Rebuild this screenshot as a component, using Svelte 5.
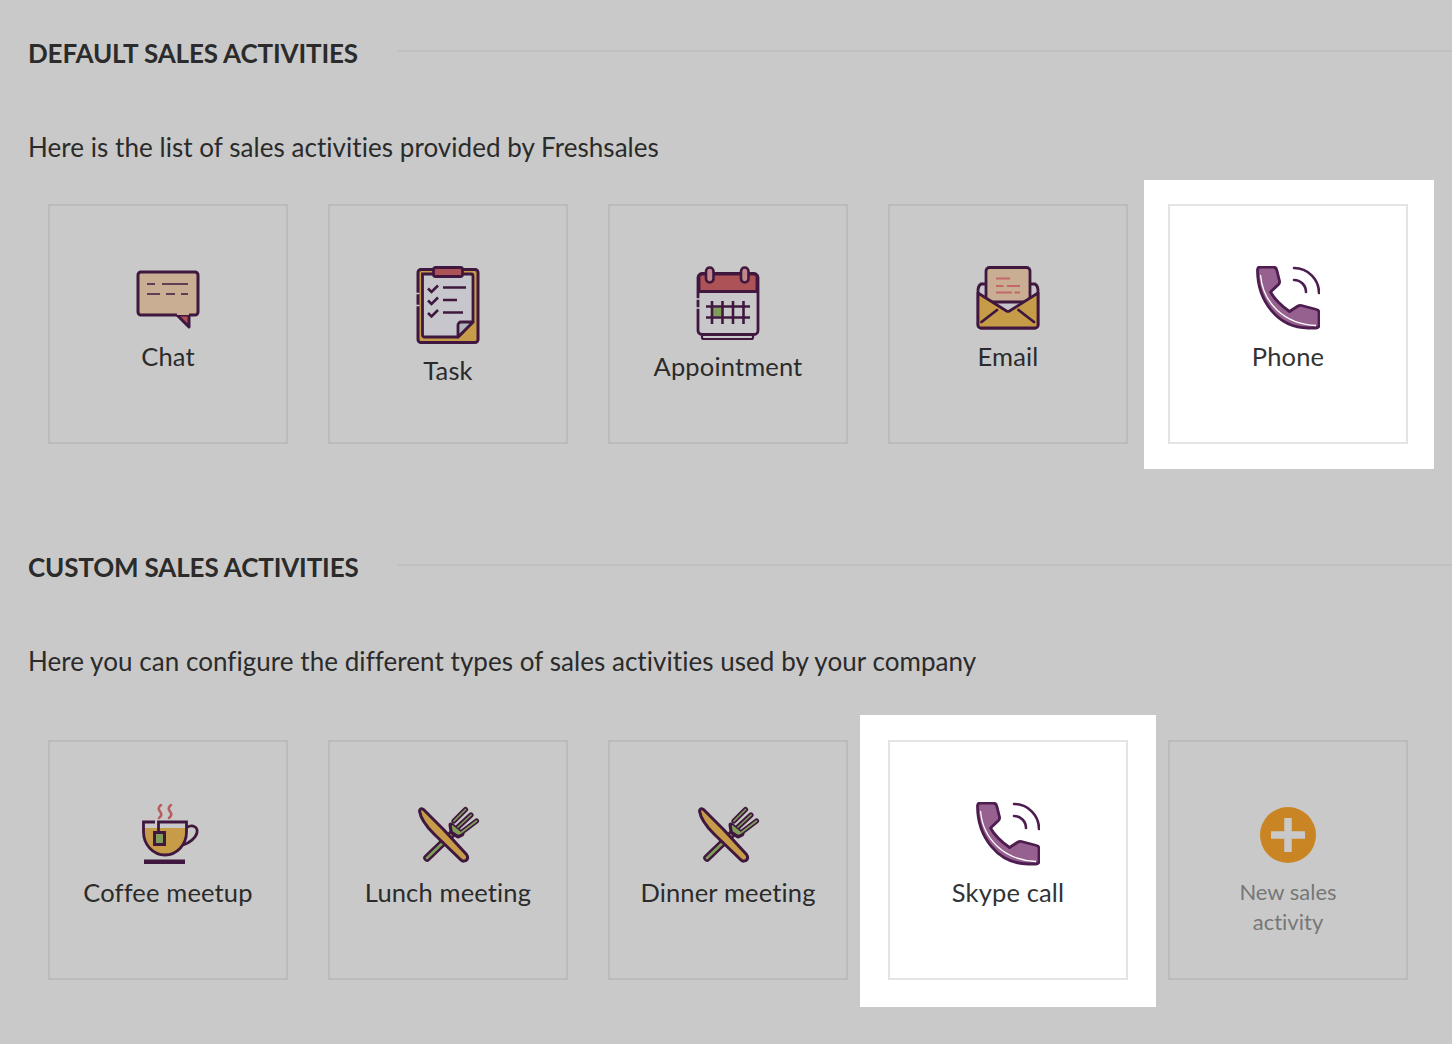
<script>
  const defaults = [
    { label: 'Chat', icon: 'chat' },
    { label: 'Task', icon: 'task' },
    { label: 'Appointment', icon: 'calendar' },
    { label: 'Email', icon: 'email' },
    { label: 'Phone', icon: 'phone', spot: 'spot-right' }
  ];

  const customs = [
    { label: 'Coffee meetup', icon: 'coffee' },
    { label: 'Lunch meeting', icon: 'cutlery' },
    { label: 'Dinner meeting', icon: 'cutlery' },
    { label: 'Skype call', icon: 'phone', spot: 'spot-mid' }
  ];

  const ink = '#40183f';
  const red = '#ad5257';
  const gold = '#c79c49';
  const tan = '#c9ae93';
  const paper = '#c6c6cc';
  const green = '#7f9f58';
</script>

{#snippet icon(name)}
  {#if name === 'chat'}
    <svg width="64" height="64" viewBox="0 0 64 64">
      <path d="M41 49l12 12V49z" fill={red} stroke={ink} stroke-width="3" stroke-linejoin="round" />
      <path d="M41 49H5a3 3 0 0 1-3-3V9a3 3 0 0 1 3-3h54a3 3 0 0 1 3 3v37a3 3 0 0 1-3 3h-6" fill={tan} stroke={ink} stroke-width="3" />
      <path d="M11 18h8M26 18h26M11 28h13M30 28h9M45 28h7" stroke={ink} stroke-width="1.600" fill="none" />
    </svg>
  {:else if name === 'task'}
    <svg width="64" height="78" viewBox="0 0 64 78">
      <rect x="2" y="3.500" width="60" height="73" rx="3" fill={gold} stroke={ink} stroke-width="3" />
      <path d="M6.500 8H55a2 2 0 0 1 2 2v46L42 71H8.500a2 2 0 0 1-2-2z" fill={paper} stroke={ink} stroke-width="2.800" />
      <path d="M57 56H45a3 3 0 0 0-3 3v12z" fill="#aeb4c0" stroke={ink} stroke-width="2.800" stroke-linejoin="round" />
      <rect x="17.500" y="1.500" width="29" height="9" rx="2" fill={red} stroke={ink} stroke-width="2.800" />
      <path d="M12 22.500l3.500 3.500 6.500-6.500M12 34.500l3.500 3.500 6.500-6.500M12 47l3.500 3.500 6.500-6.500" fill="none" stroke={ink} stroke-width="2.600" />
      <path d="M27 21.500h23M27 34h14M27 46.500h20" stroke={ink} stroke-width="2.600" />
      <path d="M0 27.500h3.500M0 39.500h3.500" stroke="#c9c9c9" stroke-width="1.400" />
    </svg>
  {:else if name === 'calendar'}
    <svg width="64" height="74" viewBox="0 0 64 74">
      <path d="M6 70v1.500a1.500 1.500 0 0 0 1.500 1.500h48a1.500 1.500 0 0 0 1.500-1.500V68" fill="none" stroke={ink} stroke-width="2.200" />
      <rect x="2" y="7.500" width="60" height="61" rx="4" fill="#c8c8cb" stroke={ink} stroke-width="2.800" />
      <path d="M3 25.500V11a3 3 0 0 1 3-3h52a3 3 0 0 1 3 3v14.500z" fill={red} stroke={ink} stroke-width="2.800" />
      <rect x="10" y="1.500" width="7.500" height="15" rx="3.750" fill="#c08a8c" stroke={ink} stroke-width="2.600" />
      <rect x="45" y="1.500" width="7.500" height="15" rx="3.750" fill="#c08a8c" stroke={ink} stroke-width="2.600" />
      <rect x="16.500" y="41.500" width="9.500" height="9" fill={green} />
      <path d="M10 40.500h44M10 51.500h44M16 35v23M26.500 35v23M37 35v23M47.500 35v23" stroke={ink} stroke-width="2.600" fill="none" />
      <path d="M0 33h4.500M0 42h4.500" stroke="#c9c9c9" stroke-width="1.500" />
    </svg>
  {:else if name === 'email'}
    <svg width="64" height="64" viewBox="0 0 64 64">
      <path d="M5 18Q2 20 2 24v35a3 3 0 0 0 3 3h54a3 3 0 0 0 3-3V24q0-4-3-6z" fill={paper} stroke={ink} stroke-width="2.800" />
      <path d="M10 36V5a3.500 3.500 0 0 1 3.500-3.500h37A3.500 3.500 0 0 1 54 5v31z" fill={tan} stroke={ink} stroke-width="2.800" />
      <path d="M20 12.500h14M20 20h7.500M31 20h13M20 26.500h16M38.500 26.500H44" stroke="#c5676a" stroke-width="1.800" />
      <path d="M2 27l28.500 18a3 3 0 0 0 3 0L62 27v32a3 3 0 0 1-3 3H5a3 3 0 0 1-3-3z" fill={gold} stroke={ink} stroke-width="2.800" stroke-linejoin="round" />
      <path d="M5.500 56L21 44M58 56L42.500 44" stroke={ink} stroke-width="2.800" stroke-linecap="round" />
    </svg>
  {:else if name === 'phone'}
    <svg width="64" height="64" viewBox="0 1 64 64" class="phone">
      <path d="M1.500 5Q1.500 2 4.500 2H17Q20 2 20.800 5L23.500 16Q24 18 22.500 19.500L14.500 27Q20 37 33.500 46.500L42 41Q43.500 40 45.500 40.500L60.500 44.500Q63 45 63 48V60Q63 63 60 63H52C22 63 1.500 36 1.500 5Z" fill="#96608f" stroke="#4c1d4e" stroke-width="2.800" stroke-linejoin="round" />
      <path d="M4.500 10C7 38 28 59 60 60.500" fill="none" stroke="#fff" stroke-width="1.300" />
      <path d="M38 3A25 25 0 0 1 63 28M38 15A12 12 0 0 1 50 27" fill="none" stroke="#4c1d4e" stroke-width="2.600" stroke-linecap="round" />
    </svg>
  {:else if name === 'coffee'}
    <svg width="64" height="64" viewBox="0 0 64 64">
      <path d="M8 21H50V30A21 23 0 0 1 8 30Z" fill="#c9c9cc" />
      <path d="M8 26H50V30A21 23 0 0 1 8 30Z" fill={gold} />
      <path d="M50.500 25.500C57 22 62 25 61 30.500C60 36 53 41 47 43" fill="none" stroke={ink} stroke-width="2.800" />
      <path d="M19 20H7.500V30A21.500 23 0 0 0 50.500 30V20H22.500V30" fill="none" stroke={ink} stroke-width="2.800" />
      <rect x="18.500" y="30.500" width="10" height="12" fill={green} stroke={ink} stroke-width="3" />
      <rect x="8" y="57.500" width="41" height="4.500" fill={ink} />
      <path d="M25 3Q21 6 24 9.500T23 16M35 3Q31 6 34 9.500T33 16" fill="none" stroke="#b95c5f" stroke-width="2.600" stroke-linecap="round" />
    </svg>
  {:else if name === 'cutlery'}
    <svg width="64" height="64" viewBox="0 0 64 64">
      <path d="M11 56L36 32" stroke={ink} stroke-width="7.500" stroke-linecap="round" />
      <path d="M11 56L36 32" stroke={green} stroke-width="2.600" stroke-linecap="round" />
      <g stroke-linecap="round" stroke-linejoin="round">
        <path d="M49.500 7.500L38 19M55 13L42 25M60.500 19L46 30" fill="none" stroke={ink} stroke-width="5.200" />
        <path d="M35 23L46 32 42 34 36 30Z" fill={ink} stroke={ink} stroke-width="5" />
        <path d="M49.500 7.500L38 19M55 13L42 25M60.500 19L46 30" fill="none" stroke={green} stroke-width="1.700" />
        <path d="M36.500 24L45 31 42 32 37.500 29Z" fill={green} stroke={green} stroke-width="1.500" />
      </g>
      <path d="M3.500 9Q4 5.500 7.500 7.500L28 28 50.500 52.500Q53 56 50 58.500 47 60 45 58L18 32Q5 19 3.500 9Z" fill={gold} stroke={ink} stroke-width="3" stroke-linejoin="round" />
    </svg>
  {/if}
{/snippet}

{#snippet card(item)}
  <div class="card {item.spot ?? ''}">
    {@render icon(item.icon)}
    <span class="label">{item.label}</span>
  </div>
{/snippet}

<main class="page">
  <section>
    <header>
      <h2>DEFAULT SALES ACTIVITIES</h2>
      <span class="rule"></span>
    </header>
    <p>Here is the list of sales activities provided by Freshsales</p>
    <div class="grid first">
      {#each defaults as item}
        {@render card(item)}
      {/each}
    </div>
  </section>

  <section class="custom">
    <header>
      <h2>CUSTOM SALES ACTIVITIES</h2>
      <span class="rule"></span>
    </header>
    <p>Here you can configure the different types of sales activities used by your company</p>
    <div class="grid second">
      {#each customs as item}
        {@render card(item)}
      {/each}
      <div class="card new">
        <svg width="64" height="64" viewBox="0 0 64 64">
          <circle cx="32" cy="33" r="28" fill="#c98524" />
          <path d="M32 16v34M15 33h34" stroke="#c9c9c9" stroke-width="7.500" />
        </svg>
        <span class="label">New sales<br />activity</span>
      </div>
    </div>
  </section>
</main>

<style>
  :global(body) {
    background: #c9c9c9;
  }

  .page {
    height: 1044px;
    box-sizing: border-box;
    padding: 36px 0 0 28px;
    overflow: hidden;
    font-family: Lato, "Liberation Sans", sans-serif;
    font-variant-ligatures: none;
    color: #2b2b2b;
  }

  header {
    display: flex;
    align-items: center;
    gap: 40px;
    height: 34px;
  }

  h2 {
    width: 330px;
    margin: 0;
    font-size: 26px;
    font-weight: 700;
    line-height: 34px;
    letter-spacing: -0.15px;
    white-space: nowrap;
  }

  .rule {
    flex: 1;
    height: 2px;
    margin-top: -4px;
    background: #c0c0c0;
  }

  p {
    margin: 60px 0 0;
    font-size: 26px;
    line-height: 34px;
    letter-spacing: 0.05px;
  }

  .grid {
    display: flex;
    gap: 40px;
    margin-left: 20px;
    isolation: isolate;
  }

  .first {
    margin-top: 40px;
  }

  .second {
    margin-top: 62px;
  }

  .custom {
    margin-top: 106px;
  }

  .card {
    position: relative;
    box-sizing: border-box;
    width: 240px;
    height: 240px;
    padding-top: 60px;
    border: 2px solid #bbbbbb;
    display: flex;
    flex-direction: column;
    align-items: center;
  }

  .label {
    margin-top: 10px;
    font-size: 25.5px;
    line-height: 32px;
    letter-spacing: 0.15px;
    text-align: center;
  }

  .spot-right,
  .spot-mid {
    background: #fff;
    border-color: #e4e4e4;
    color: #333;
  }

  .spot-right::before,
  .spot-mid::before {
    content: "";
    position: absolute;
    background: #fff;
    z-index: -1;
  }

  .spot-right::before {
    inset: -26px -28px -27px -26px;
  }

  .spot-mid::before {
    inset: -27px -30px -29px -30px;
  }

  .new .label {
    margin-top: 11px;
    font-size: 22px;
    line-height: 30px;
    letter-spacing: 0;
    color: #777;
  }
</style>
